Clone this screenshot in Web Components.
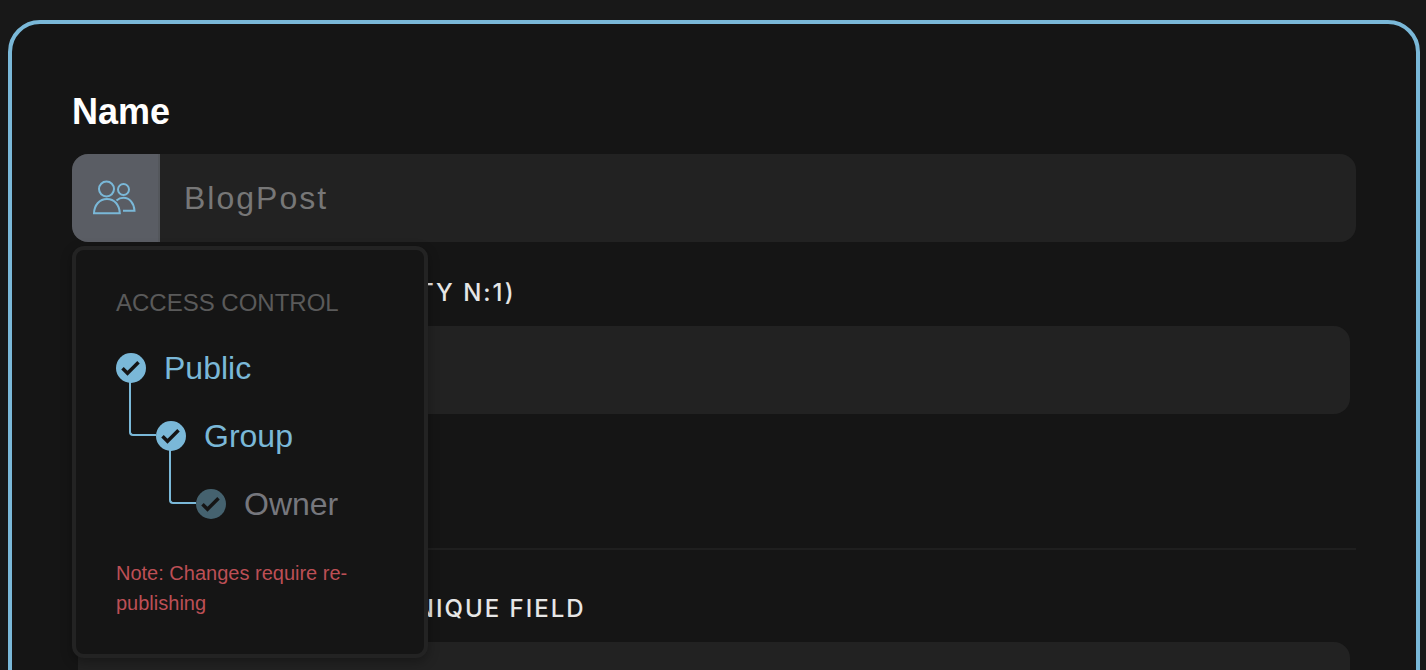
<!DOCTYPE html>
<html lang="en">
<head>
<meta charset="utf-8">
<title>Model editor</title>
<style>
  html, body { margin: 0; background: #181818; }
  body { font-family: "Liberation Sans", Arial, sans-serif; color: #fff; }
</style>
</head>
<body>
<model-editor></model-editor>

<script>
function define(name, html, setup) {
  const template = document.createElement('template');
  template.innerHTML = html;
  customElements.define(name, class extends HTMLElement {
    constructor() {
      super();
      this.attachShadow({ mode: 'open' }).append(template.content.cloneNode(true));
    }
    connectedCallback() { if (setup) setup(this, this.shadowRoot); }
  });
}

define('people-icon', `
  <style>
    :host { display: block; width: 44px; height: 36px; }
    svg { display: block; fill: none; stroke: #7ab8d8; stroke-width: 2; }
  </style>
  <svg width="44" height="36" viewBox="0 0 44 36" aria-hidden="true">
    <circle cx="14.5" cy="9" r="7.5"/>
    <path d="M2 33.2C2.4 25 7.5 19 15 19s12.4 6 12.8 14.200z"/>
    <circle cx="31.500" cy="9.500" r="5.500"/>
    <path d="M24.500 20.500C27 18.200 29.500 17.800 31.500 17.800c6 0 10.500 5 11 12.900H31"/>
  </svg>`);

/* One permission: a round tick box with an elbow line leading to its child */
define('access-level', `
  <style>
    :host { display: block; }
    .row { display: flex; align-items: center; gap: 18px; height: 40px; }
    .tick { display: grid; width: 30px; height: 30px; }
    .tick > * { grid-area: 1 / 1; }
    input { appearance: none; margin: 0; width: 30px; height: 30px; border-radius: 50%; background: #7ab8d8; }
    svg { pointer-events: none; z-index: 1; fill: none; stroke: #151515; stroke-width: 3.5; }
    label { font-size: 32px; line-height: 40px; color: #7ab8d8; }
    .child { display: grid; grid-template-columns: 40px 1fr; margin-top: 28px; }
    .child::before {
      content: ""; width: 25px; height: 52px; margin: -34px 0 0 13px;
      border: solid #7ab8d8; border-width: 0 0 2px 2px; border-bottom-left-radius: 4px;
    }
    :host([last]) .child { display: none; }
    :host([inherited]) input { background: #45626f; }
    :host([inherited]) label { color: #76777d; }
  </style>
  <div class="row">
    <span class="tick">
      <input id="box" type="checkbox" checked>
      <svg width="30" height="30" viewBox="0 0 30 30" aria-hidden="true"><path d="M6.500 15.200l5 5L22.500 9.200"/></svg>
    </span>
    <label for="box"></label>
  </div>
  <div class="child"><slot></slot></div>`,
  (host, root) => {
    root.querySelector('label').textContent = host.getAttribute('name');
    root.querySelector('input').disabled = host.hasAttribute('inherited');
  });

define('access-menu', `
  <style>
    :host {
      display: block; box-sizing: border-box; width: 356px; padding: 36px 40px;
      border: 4px solid #232323; border-radius: 12px; background: #151515;
      box-shadow: 0 4px 12px rgba(0, 0, 0, .3);
    }
    h2 { margin: 0 0 28px; font-size: 24px; line-height: 34px; font-weight: 400; color: #5a5a5a; white-space: nowrap; }
    p { margin: 34px 0 0; font-size: 20px; line-height: 30px; color: #bd4f55; }
  </style>
  <h2>ACCESS CONTROL</h2>
  <access-level name="Public">
    <access-level name="Group">
      <access-level name="Owner" inherited last></access-level>
    </access-level>
  </access-level>
  <p>Note: Changes require re-publishing</p>`);

define('name-field', `
  <style>
    :host { display: block; position: relative; }
    label { display: block; font-size: 36px; line-height: 44px; font-weight: 700; }
    .bar { display: flex; height: 88px; margin-top: 20px; border-radius: 16px; overflow: hidden; background: #222; }
    button {
      flex: none; display: grid; place-items: center; width: 88px; padding: 0 2px 0 0;
      border: 0; border-right: 2px solid #54575c; background: #5a5d64;
    }
    input {
      flex: 1; min-width: 0; padding: 0 24px; border: 0; outline: 0; background: none; color: #fff;
      font: 32px "Liberation Sans", Arial, sans-serif; letter-spacing: 2px;
    }
    input::placeholder { color: #777; opacity: 1; }
    access-menu { position: absolute; z-index: 2; top: calc(100% + 4px); left: 0; }
  </style>
  <label for="name">Name</label>
  <div class="bar">
    <button type="button" aria-label="Access control"><people-icon></people-icon></button>
    <input id="name" type="text" placeholder="BlogPost">
  </div>
  <access-menu></access-menu>`);

define('text-field', `
  <style>
    :host { display: block; margin: 0 6px; }
    label {
      display: block; padding-left: var(--indent); margin-bottom: 16px; white-space: nowrap;
      font: 500 24px/34px Inter, "Liberation Sans", sans-serif; letter-spacing: 2px; color: #e6e6e6;
    }
    input {
      display: block; box-sizing: border-box; width: 100%; height: 88px; padding: 0 24px;
      border: 0; border-radius: 16px; outline: 0; background: #222; color: #fff; font-size: 32px;
    }
  </style>
  <label for="field"></label>
  <input id="field" type="text">`,
  (host, root) => { root.querySelector('label').textContent = host.getAttribute('label'); });

define('model-editor', `
  <style>
    :host { display: block; height: 100vh; overflow: hidden; }
    main {
      box-sizing: border-box; margin: 20px 6px 0 8px; padding: 66px 60px;
      border: 4px solid #7ab8d8; border-radius: 32px; background: #151515;
    }
    text-field { margin-top: 34px; }
    .relation { --indent: 340px; }
    .unique { --indent: 318px; margin-top: 42px; }
    hr { height: 2px; margin: 134px 0 0; border: 0; background: #1f1f1f; }
  </style>
  <main>
    <name-field></name-field>
    <text-field class="relation" label="TY N:1)"></text-field>
    <hr>
    <text-field class="unique" label="UNIQUE FIELD"></text-field>
  </main>`);
</script>
</body>
</html>
